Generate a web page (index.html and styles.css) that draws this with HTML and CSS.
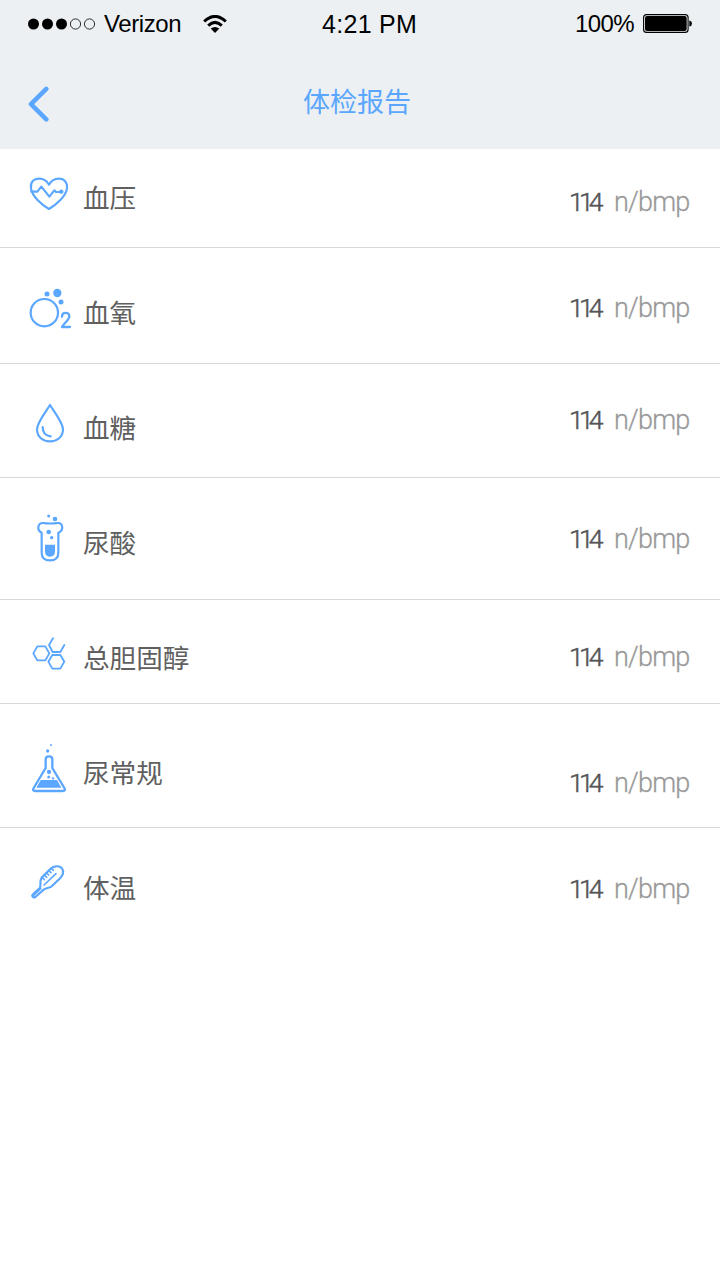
FILE: index.html
```html
<!DOCTYPE html>
<html lang="zh-CN">
<head>
<meta charset="utf-8">
<title>体检报告</title>
<link rel="stylesheet" href="styles.css">
</head>
<body>
<header class="header">
  <div class="status">
    <div class="carrier">
      <svg class="signal" viewBox="0 0 68 12"><circle cx="5.5" cy="6" r="5.5"/><circle cx="19.5" cy="6" r="5.5"/><circle cx="33.5" cy="6" r="5.5"/><g class="hollow"><circle cx="47.5" cy="6" r="5.1"/><circle cx="61.5" cy="6" r="5.1"/></g></svg>
      <span class="carrier-name">Verizon</span>
      <svg class="wifi" viewBox="0 0 24 19"><path class="arc" d="M1.2 6.5Q12 -3.6 22.8 6.5M5.2 10.6Q12 4.2 18.8 10.6"/><path d="M7.7 13.5Q12 10.4 16.3 13.5L12 18Z"/></svg>
    </div>
    <span class="time">4:21 PM</span>
    <div class="power">
      <span class="percent">100%</span>
      <svg class="battery" viewBox="0 0 50 20"><rect class="shell" x=".6" y=".6" width="44.5" height="17.8" rx="3"/><rect x="2" y="2" width="41.7" height="15" rx="2"/><path d="M46.3 6.5Q49 7 49 9.5T46.3 12.5Z"/></svg>
    </div>
  </div>
  <nav class="nav">
    <svg class="back" viewBox="0 0 22 36"><path d="M18.3 2.8L3 18.2L18.3 33.4"/></svg>
    <h1 class="title">体检报告</h1>
  </nav>
</header>
<main class="list">
  <section class="row pressure">
    <svg class="icon" viewBox="0 0 180 180"><path d="M87 132C66 120 36 94 33 70C30 50 42 41 57 41C72 41 82 50 87 59C93 48 104 41 117 41C133 41 143 53 141 71C137 95 108 120 87 132Z"/><path d="M34 80H52L64 65L88 95L103 76L108 81H125"/><circle class="fill" cx="124" cy="80" r="6.5"/></svg>
    <span class="label">血压</span><span class="value"><b>114</b><i>n/bmp</i></span>
  </section>
  <section class="row oxygen">
    <svg class="icon" viewBox="0 0 180 180"><circle cx="73" cy="98" r="41"/><g class="fill"><circle cx="81" cy="42" r="7.5"/><circle cx="112" cy="39" r="12.5"/><circle cx="123" cy="66" r="7.5"/></g><path class="two" d="M126 110C126 95 148 95 148 109C148 120 131 130 126 141H150"/></svg>
    <span class="label">血氧</span><span class="value"><b>114</b><i>n/bmp</i></span>
  </section>
  <section class="row sugar">
    <svg class="icon" viewBox="0 0 180 180"><path d="M90 30C82 44 51 82 51 103C51 126 69 139 90 139S129 126 129 103C129 82 98 44 90 30Z"/><path d="M68 96Q68 122 92 124"/></svg>
    <span class="label">血糖</span><span class="value"><b>114</b><i>n/bmp</i></span>
  </section>
  <section class="row acid">
    <svg class="icon" viewBox="0 0 180 195"><path d="M70 54C79 56 103 56 112 54C130 53 132 76 115 83V143Q115 166 90 166T65 143V83C50 76 52 53 70 54Z"/><g class="fill"><path d="M75 119H105V139Q105 155 90 155T75 139Z"/><circle cx="86" cy="33" r="4.5"/><circle cx="105" cy="42" r="7"/><circle cx="86" cy="81" r="7"/><circle cx="95" cy="98" r="5"/></g></svg>
    <span class="label">尿酸</span><span class="value"><b>114</b><i>n/bmp</i></span>
  </section>
  <section class="row cholesterol">
    <svg class="icon" viewBox="0 0 180 150"><path d="M52 49H76L88 70L76 91H52L40 70ZM97 75H121L133 95L121 116H97L85 95ZM99 25L87 45L98 66H121L133 45"/></svg>
    <span class="label">总胆固醇</span><span class="value"><b>114</b><i>n/bmp</i></span>
  </section>
  <section class="row routine">
    <svg class="icon" viewBox="0 0 180 195"><path class="flask" d="M77 99V73Q77 64 87 64T97 73V99L133 159Q138 168 128 168H46Q36 168 41 159Z"/><g class="fill"><path d="M62 135H111L124 158H49Z"/><circle cx="93" cy="30" r="3"/><circle cx="83" cy="48" r="5"/><circle cx="87" cy="111" r="6.5"/><circle cx="86" cy="126" r="4.5"/><circle cx="99" cy="130" r="3.5"/></g></svg>
    <span class="label">尿常规</span><span class="value"><b>114</b><i>n/bmp</i></span>
  </section>
  <section class="row temperature">
    <svg class="icon" viewBox="0 0 180 165"><path d="M60 98C63 90 60 82 62 75C63 70 66 67 70 63L91 42C101 32 118 31 126 40C133 49 128 62 121 69L96 93C89 100 80 98 71 104L46 126Q41 129 38 125T40 117Z"/><path class="mercury" d="M72 90L108 56M65 66L73 74M72 59L80 67M79 53L86 60M86 46L93 53M94 40L100 46M40 122L62 101"/></svg>
    <span class="label">体温</span><span class="value"><b>114</b><i>n/bmp</i></span>
  </section>
</main>
</body>
</html>
```
FILE: styles.css
```css
* { box-sizing: border-box; }
body { margin: 0; width: 720px; height: 1280px; background: #fff; overflow: hidden; font-family: "Liberation Sans", "Noto Sans CJK SC", sans-serif; }
.header { height: 149px; background: #ecf0f3; }
.status { display: grid; grid-template-columns: 240px 1fr 240px; height: 48px; align-items: center; padding: 0 28px; color: #000; font-size: 25px; line-height: 48px; }
.carrier, .power { display: flex; align-items: center; }
.power { justify-content: flex-end; }
.signal { width: 68px; height: 12px; }
.hollow { fill: none; stroke: #000; stroke-width: .8; }
.carrier-name { margin-left: 8px; width: 99px; font-size: 24px; letter-spacing: -.4px; }
.wifi { width: 24px; height: 19px; }
.arc { fill: none; stroke: #000; stroke-width: 3; }
.time { padding-left: 54px; letter-spacing: .3px; white-space: nowrap; }
.percent { margin-right: 9px; letter-spacing: -.6px; font-size: 24px; }
.battery { width: 50px; height: 20px; flex: none; margin-right: -1px; }
.shell { fill: none; stroke: #000; stroke-width: 1.1; }
.nav { display: flex; height: 101px; padding: 0 28px; }
.back { width: 22px; height: 36px; margin-top: 38px; fill: none; stroke: #5ba7ff; stroke-width: 4.5; stroke-linecap: round; stroke-linejoin: round; }
.title { margin: 31px 0 0 253px; font: 400 27px/44px "Noto Sans CJK SC", sans-serif; color: #5ba7ff; }
.row { display: flex; align-items: flex-start; padding: 0 30px 0 20px; border-bottom: 1px solid #d7d7d7; }
.icon { width: 60px; flex: none; fill: none; stroke: #5ba7ff; stroke-width: 6.5; stroke-linejoin: round; stroke-linecap: round; }
.fill { fill: #5ba7ff; stroke: none; }
.two, .flask { stroke-width: 7; }
.cholesterol .icon { stroke-width: 5.5; }
.mercury { stroke-width: 5; }
.label { margin: -1px 0 0 3px; color: #606060; font: 400 26.6px/40px "Noto Sans CJK SC", sans-serif; }
.value { display: flex; margin-left: auto; width: 121px; font: 300 27px/40px Roboto, sans-serif; -webkit-text-stroke: .3px currentColor; }
.value b { width: 45px; font-weight: 300; color: #555; font-size: 26.5px; letter-spacing: -4.8px; -webkit-text-stroke: .5px currentColor; }
.value i { font-style: normal; color: #999; letter-spacing: -.8px; }
.pressure { height: 99px; }
.oxygen { height: 116px; }
.sugar { height: 114px; }
.acid { height: 122px; }
.cholesterol { height: 104px; }
.routine { height: 124px; }
.temperature { height: 100px; border-bottom: 0; }
.pressure .icon { margin-top: 16px; }
.oxygen .icon { margin-top: 32px; }
.sugar .icon { margin-top: 31px; }
.acid .icon { margin-top: 27px; }
.cholesterol .icon { margin-top: 30px; }
.routine .icon { margin-top: 31px; }
.temperature .icon { margin-top: 27px; }
.pressure .label { margin-top: 28px; }
.oxygen .label { margin-top: 44px; }
.sugar .label { margin-top: 43px; }
.acid .label { margin-top: 44px; }
.cholesterol .label { margin-top: 37px; }
.routine .label { margin-top: 48px; }
.temperature .label { margin-top: 39px; }
.pressure .value { margin-top: 33px; }
.oxygen .value { margin-top: 40px; }
.sugar .value { margin-top: 36px; }
.acid .value { margin-top: 41px; }
.cholesterol .value { margin-top: 37px; }
.routine .value { margin-top: 59px; }
.temperature .value { margin-top: 41px; }
```
